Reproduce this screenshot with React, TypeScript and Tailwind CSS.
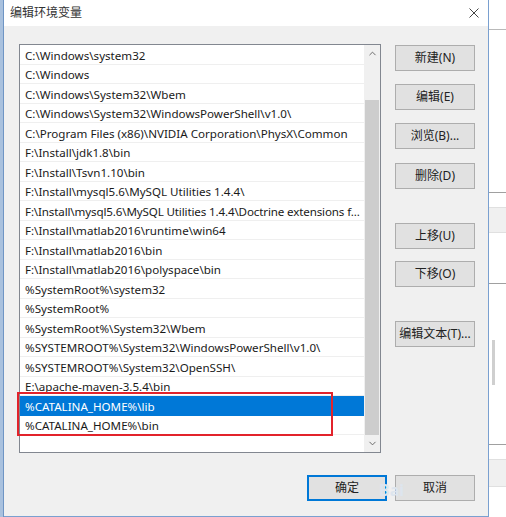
import { ChevronUp, ChevronDown } from 'lucide-react'

const paths = [
  'C:\\Windows\\system32',
  'C:\\Windows',
  'C:\\Windows\\System32\\Wbem',
  'C:\\Windows\\System32\\WindowsPowerShell\\v1.0\\',
  'C:\\Program Files (x86)\\NVIDIA Corporation\\PhysX\\Common',
  'F:\\Install\\jdk1.8\\bin',
  'F:\\Install\\Tsvn1.10\\bin',
  'F:\\Install\\mysql5.6\\MySQL Utilities 1.4.4\\',
  'F:\\Install\\mysql5.6\\MySQL Utilities 1.4.4\\Doctrine extensions f...',
  'F:\\Install\\matlab2016\\runtime\\win64',
  'F:\\Install\\matlab2016\\bin',
  'F:\\Install\\matlab2016\\polyspace\\bin',
  '%SystemRoot%\\system32',
  '%SystemRoot%',
  '%SystemRoot%\\System32\\Wbem',
  '%SYSTEMROOT%\\System32\\WindowsPowerShell\\v1.0\\',
  '%SYSTEMROOT%\\System32\\OpenSSH\\',
  'E:\\apache-maven-3.5.4\\bin',
  '%CATALINA_HOME%\\lib',
  '%CATALINA_HOME%\\bin',
]

const SELECTED = 18
const LONG = 8

function Button({ label, primary = false }: { label: string; primary?: boolean }) {
  return (
    <div
      className={
        primary
          ? 'w-[80px] h-[26px] flex items-center justify-center bg-[#e1e1e1] border-2 border-[#0078d7] text-[12px] text-[#222]'
          : 'w-[80px] h-[26px] flex items-center justify-center bg-[#e1e1e1] border border-[#adadad] text-[12px] text-[#222]'
      }
    >
      {label}
    </div>
  )
}

export default function App() {
  return (
    <div
      className="w-[506px] h-[517px] flex bg-white overflow-hidden"
      style={{ fontFamily: '"Noto Sans", "Noto Sans CJK SC", sans-serif' }}
    >
      {/* window edge behind, left */}
      <div className="w-[4px] h-full bg-[#a9c1de] border-r border-[#6f95c4]" />

      {/* dialog */}
      <div className="w-[485px] h-full flex flex-col border-r border-b border-[#7aa0d0]">
        {/* title bar */}
        <div className="h-[26px] bg-white flex items-center justify-between pl-[6px] pr-[9px]">
          <span className="text-[12px] text-[#333]">编辑环境变量</span>
          <svg width="10" height="10" viewBox="0 0 10 10">
            <path d="M0.5 0.5 L9.5 9.5 M9.5 0.5 L0.5 9.5" stroke="#444" strokeWidth="1" />
          </svg>
        </div>

        {/* body */}
        <div className="relative flex-1 bg-[#f0f0f0] flex flex-col pl-[15px] pr-[13px] pt-[18px]">
          <div className="flex gap-[14px]">
            {/* list box */}
            <div className="relative w-[362px] h-[409px] shrink-0 bg-white border border-[#828790] flex">
              <div className="flex-1 min-w-0 flex flex-col">
                {paths.map((p, i) => (
                  <div
                    key={p}
                    className={
                      i === SELECTED
                        ? 'h-[19.5px] flex items-center pl-[5px] pt-[2px] bg-[#0078d7] text-white text-[11.6px] whitespace-nowrap overflow-hidden'
                        : i === LONG
                          ? 'h-[19.5px] flex items-center pl-[5px] pt-[2px] border-b border-[#efefef] text-[#1a1a1a] text-[11.6px] tracking-[-0.14px] whitespace-nowrap overflow-hidden'
                          : 'h-[19.5px] flex items-center pl-[5px] pt-[2px] border-b border-[#efefef] text-[#1a1a1a] text-[11.6px] whitespace-nowrap overflow-hidden'
                    }
                  >
                    {p}
                  </div>
                ))}
              </div>

              {/* scrollbar */}
              <div className="w-[16px] shrink-0 h-full bg-[#f0f0f0] flex flex-col">
                <div className="h-[17px] flex items-center justify-center text-[#606060]">
                  <ChevronUp size={11} strokeWidth={2} />
                </div>
                <div className="h-[38px]" />
                <div className="flex-1 mx-[1px] bg-[#cdcdcd]" />
                <div className="h-[17px] flex items-center justify-center text-[#606060]">
                  <ChevronDown size={11} strokeWidth={2} />
                </div>
              </div>

              {/* red highlight box */}
              <div className="absolute left-[-3px] top-[347px] w-[316px] h-[44px] border-2 border-[#e2232b]" />
            </div>

            {/* side buttons */}
            <div className="flex flex-col pt-[1px]">
              <Button label="新建(N)" />
              <div className="h-[13px]" />
              <Button label="编辑(E)" />
              <div className="h-[13px]" />
              <Button label="浏览(B)..." />
              <div className="h-[14px]" />
              <Button label="删除(D)" />
              <div className="h-[34px]" />
              <Button label="上移(U)" />
              <div className="h-[12px]" />
              <Button label="下移(O)" />
              <div className="h-[34px]" />
              <Button label="编辑文本(T)..." />
            </div>
          </div>

          {/* bottom buttons */}
          <div className="flex justify-end gap-[8px] mt-[22px]">
            <Button label="确定" primary />
            <Button label="取消" />
          </div>

          {/* watermark */}
          <span className="absolute left-[375px] top-[452px] text-[16px] font-bold text-[#dde5ee] pointer-events-none">
            Bai
          </span>
        </div>
      </div>

      {/* window behind, right */}
      <div className="flex-1 h-full bg-white flex flex-col">
        <div className="h-[30px] border-b border-[#b9b9b9]" />
        <div className="h-[163px] border-b border-[#a0a0a0]" />
        <div className="h-[15px] border-b border-[#e0e0e0]" />
        <div className="h-[25px] bg-[#f0f0f0] border-b border-[#e0e0e0]" />
        <div className="h-[51px] border-b border-[#a0a0a0]" />
        <div className="h-[56px] pl-[3px]">
          <div className="mt-[56px] w-[3px] h-[45px] bg-[#cfcfcf]" />
        </div>
        <div className="h-[105px] border-b border-[#a0a0a0]" />
        <div className="h-[15px] border-b border-[#e0e0e0]" />
        <div className="h-[27px] bg-[#f0f0f0] border-b border-[#e0e0e0]" />
        <div className="flex-1" />
      </div>
    </div>
  )
}
